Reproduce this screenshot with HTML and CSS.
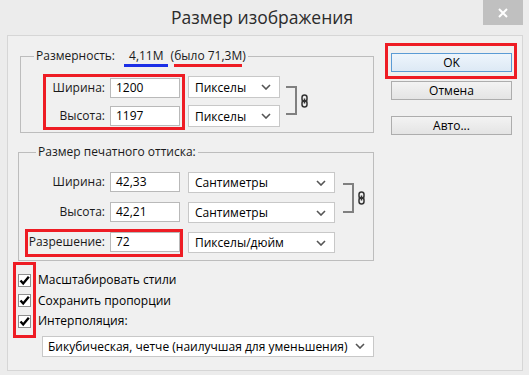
FILE: index.html
```html
<!DOCTYPE html>
<html lang="ru">
<head>
    <meta charset="UTF-8">
    <meta name="viewport" content="width=device-width, initial-scale=1.0">
    <title>Размер изображения</title>
    <link rel="stylesheet" href="styles.css">
</head>
<body>
    <div class="window">
        <div class="titlebar">
            <span></span>
            <div class="title">Размер изображения</div>
            <div class="close">
                <svg width="10" height="10" viewBox="0 0 10 10"><path d="M1 1L9 9M9 1L1 9" stroke="#fff" stroke-width="2"/></svg>
            </div>
        </div>
        <div class="content">
            <div class="left">
                <fieldset class="group group-pixels">
                    <legend>Размерность:<span class="mark-blue">4,11M</span> (<span class="mark-red">было 71,3M</span>)</legend>
                    <div class="pixels-body">
                        <div class="redbox pixel-fields">
                            <label>Ширина:</label><div class="field">1200</div>
                            <label>Высота:</label><div class="field">1197</div>
                        </div>
                        <div class="units">
                            <div class="select unit-px"><span>Пикселы</span><svg width="10" height="6" viewBox="0 0 10 6"><path d="M1 1L5 5L9 1" fill="none" stroke="#555" stroke-width="1.6"/></svg></div>
                            <div class="select unit-px"><span>Пикселы</span><svg width="10" height="6" viewBox="0 0 10 6"><path d="M1 1L5 5L9 1" fill="none" stroke="#555" stroke-width="1.6"/></svg></div>
                        </div>
                        <div class="link">
                            <div class="bracket"></div>
                            <svg class="chain" width="7" height="14" viewBox="0 0 7 14"><rect x="1" y="1" width="5" height="6.5" rx="2.5" fill="none" stroke="#333" stroke-width="1.5"/><rect x="1" y="6.5" width="5" height="6.5" rx="2.5" fill="none" stroke="#333" stroke-width="1.5"/><path d="M3.5 4.5V9.5" stroke="#333" stroke-width="1.5"/></svg>
                        </div>
                    </div>
                </fieldset>

                <fieldset class="group group-print">
                    <legend>Размер печатного оттиска:</legend>
                    <div class="print-body">
                        <div class="row-box">
                            <label>Ширина:</label><div class="field">42,33</div>
                        </div>
                        <div class="select unit-cm"><span>Сантиметры</span><svg width="10" height="6" viewBox="0 0 10 6"><path d="M1 1L5 5L9 1" fill="none" stroke="#555" stroke-width="1.6"/></svg></div>
                        <div class="link link-print">
                            <div class="bracket"></div>
                            <svg class="chain" width="7" height="14" viewBox="0 0 7 14"><rect x="1" y="1" width="5" height="6.5" rx="2.5" fill="none" stroke="#333" stroke-width="1.5"/><rect x="1" y="6.5" width="5" height="6.5" rx="2.5" fill="none" stroke="#333" stroke-width="1.5"/><path d="M3.5 4.5V9.5" stroke="#333" stroke-width="1.5"/></svg>
                        </div>
                        <div class="row-box">
                            <label>Высота:</label><div class="field">42,21</div>
                        </div>
                        <div class="select unit-cm"><span>Сантиметры</span><svg width="10" height="6" viewBox="0 0 10 6"><path d="M1 1L5 5L9 1" fill="none" stroke="#555" stroke-width="1.6"/></svg></div>
                        <div class="row-box redbox">
                            <label>Разрешение:</label><div class="field">72</div>
                        </div>
                        <div class="select unit-cm"><span>Пикселы/дюйм</span><svg width="10" height="6" viewBox="0 0 10 6"><path d="M1 1L5 5L9 1" fill="none" stroke="#555" stroke-width="1.6"/></svg></div>
                    </div>
                </fieldset>

                <div class="options">
                    <div class="redbox checks">
                        <div class="check"><svg width="15" height="15" viewBox="0 0 15 15"><rect x="1.5" y="1.5" width="12" height="12" fill="#fff" stroke="#8f8f8f"/><path d="M3.5 7.5L6.2 10.5L11.8 3.8" fill="none" stroke="#000" stroke-width="2.4"/></svg></div>
                        <div class="check"><svg width="15" height="15" viewBox="0 0 15 15"><rect x="1.5" y="1.5" width="12" height="12" fill="#fff" stroke="#8f8f8f"/><path d="M3.5 7.5L6.2 10.5L11.8 3.8" fill="none" stroke="#000" stroke-width="2.4"/></svg></div>
                        <div class="check"><svg width="15" height="15" viewBox="0 0 15 15"><rect x="1.5" y="1.5" width="12" height="12" fill="#fff" stroke="#8f8f8f"/><path d="M3.5 7.5L6.2 10.5L11.8 3.8" fill="none" stroke="#000" stroke-width="2.4"/></svg></div>
                    </div>
                    <div class="check-labels">
                        <div>Масштабировать стили</div>
                        <div>Сохранить пропорции</div>
                        <div>Интерполяция:</div>
                    </div>
                </div>
                <div class="select resample"><span>Бикубическая, четче (наилучшая для уменьшения)</span><svg width="10" height="6" viewBox="0 0 10 6"><path d="M1 1L5 5L9 1" fill="none" stroke="#555" stroke-width="1.6"/></svg></div>
            </div>

            <div class="right">
                <div class="redbox ok-box">
                    <button class="btn btn-default">OK</button>
                </div>
                <button class="btn btn-cancel">Отмена</button>
                <button class="btn btn-auto">Авто...</button>
            </div>
        </div>
    </div>
</body>
</html>
```

FILE: styles.css
```css
* {
    box-sizing: border-box;
}
body {
    margin: 0;
    background-color: #ececec;
    font-family: "Open Sans", "Noto Sans", sans-serif;
    font-size: 12px;
    color: #1a1a1a;
}
.window {
    width: 529px;
    height: 375px;
    background-color: #ececec;
}
.titlebar {
    height: 35px;
    display: grid;
    grid-template-columns: 1fr auto 1fr;
}
.title {
    font-size: 17.5px;
    line-height: 35px;
    color: #2b2b2b;
    padding-right: 5px;
}
.close {
    justify-self: end;
    width: 40px;
    height: 25px;
    margin-right: 6px;
    background-color: #c0c0c0;
    display: flex;
    align-items: center;
    justify-content: center;
}
.content {
    margin-left: 7px;
    width: 516px;
    height: 336px;
    border: 1px solid #d6d6d6;
    background-color: #f0f0f0; /* фон диалога */
    display: flex;
    gap: 10px;
    padding: 0 5px;
}
.left {
    width: 362px;
    display: flex;
    flex-direction: column;
}
.redbox {
    border: 3px solid #ee1c24; /* красная рамка */
}

/* группы */
.group {
    margin: 12px 0 0 7px;
    width: 354px;
    padding: 0;
    border: 1px solid #bdbdbd;
    min-width: 0;
}
.group legend {
    margin-left: 13px;
    padding: 0 2px;
    line-height: 16px;
}
.mark-blue {
    margin-left: 9px;
    padding: 0 4px 0 5px;
    border-bottom: 3px solid #1b2ee6;
}
.mark-red {
    border-bottom: 3px solid #ee1c24;
}
.pixels-body {
    display: flex;
    align-items: flex-start;
    padding: 10px 0 2px 22px;
}
.pixel-fields {
    display: grid;
    grid-template-columns: 59px 70px;
    column-gap: 5px;
    row-gap: 8px;
    padding: 1px 2px 1px 0;
}
label {
    text-align: right;
    line-height: 20px;
}
.field {
    height: 20px;
    border: 1px solid #b9b9b9;
    background-color: #fff;
    padding-left: 5px;
    line-height: 18px;
    color: #000;
}
.units {
    display: flex;
    flex-direction: column;
    gap: 7px;
    margin: 2px 0 0 3px;
}
.select {
    height: 22px;
    border: 1px solid #c8c8c8;
    background-color: #fff;
    display: flex;
    align-items: center;
    justify-content: space-between;
    padding: 0 8px 0 6px;
    color: #000;
}
.unit-px {
    width: 92px;
}
.link {
    display: flex;
    align-items: center;
    gap: 4px;
    margin: 12px 0 0 6px;
}
.bracket {
    width: 11px;
    height: 29px;
    border: 2px solid #808080;
    border-left: none;
}

.group-print {
    margin: 11px 0 0 5px;
    width: 356px;
}
.group-print legend {
    margin-left: 17px;
}
.print-body {
    display: grid;
    grid-template-columns: 158px 147px auto;
    column-gap: 5px;
    row-gap: 2px;
    padding: 9px 0 3px 6px;
}
.row-box {
    display: grid;
    grid-template-columns: 1fr 70px;
    column-gap: 5px;
    border: 3px solid transparent;
    padding-bottom: 2px;
}
.row-box.redbox {
    border-color: #ee1c24;
}
.unit-cm {
    height: 21px;
    margin-top: 3px;
}
.link-print {
    grid-column: 3;
    grid-row: 1 / 3;
    margin: 0 0 0 3px;
}
.link-print .bracket {
    height: 30px;
}

/* флажки */
.options {
    display: flex;
    margin-top: 1px;
}
.checks {
    padding: 5px 1px 3px 1px;
}
.check {
    height: 20.5px;
    display: flex;
    align-items: center;
}
.check-labels {
    padding-top: 8px;
    margin-left: 2px;
    color: #000;
}
.check-labels div {
    line-height: 20.5px;
}
.resample {
    width: 332px;
    height: 21px;
    margin: -2px 0 0 29px;
    padding-left: 5px;
}

/* кнопки */
.right {
    width: 132px;
    padding-top: 7px;
    display: flex;
    flex-direction: column;
}
.ok-box {
    padding: 7px 2px 4px 3px;
}
.btn {
    display: block;
    width: 121px;
    height: 19px;
    border: 1px solid #adadad;
    background: linear-gradient(#f3f3f3, #e4e4e4);
    font-family: "Open Sans", "Noto Sans", sans-serif;
    font-size: 12px;
    line-height: 15px;
    color: #000;
    padding: 0;
}
.btn-default {
    border-color: #5b9bd5; /* кнопка по умолчанию */
    background: linear-gradient(#eef5fc, #dde9f5);
}
.btn-cancel {
    margin: 2px 0 0 6px;
}
.btn-auto {
    margin: 16px 0 0 6px;
}
```
